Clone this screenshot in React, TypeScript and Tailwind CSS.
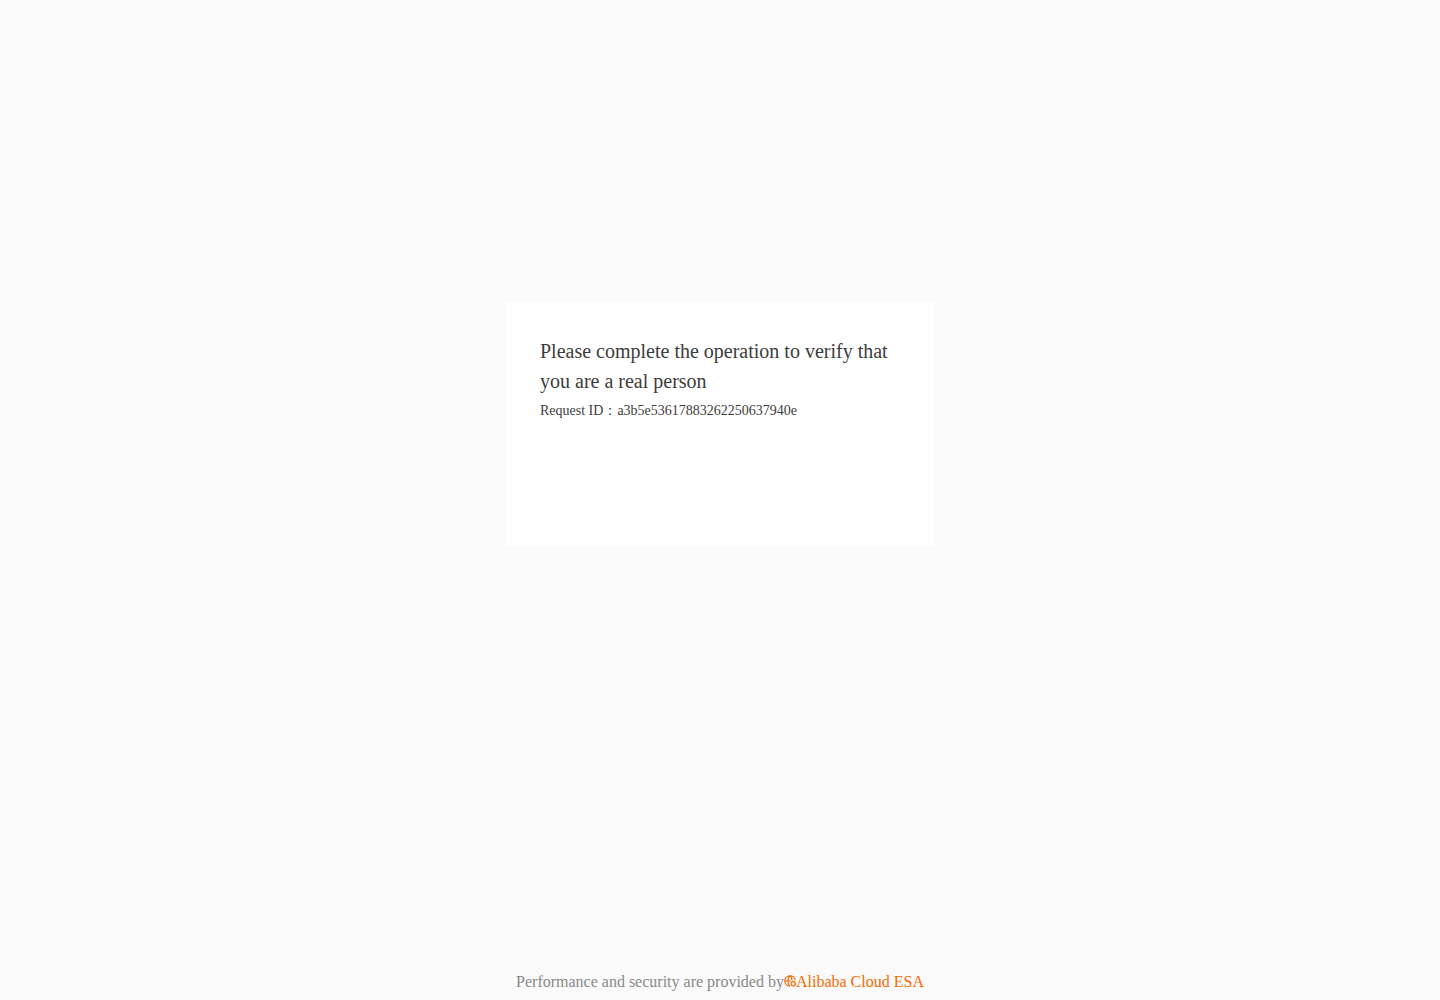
import React from 'react';

const REQUEST_ID = 'a3b5e53617883262250637940e';

const EsaIcon: React.FC = () => (
  <svg className="mb-0.5 h-3 w-3 shrink-0" viewBox="0 0 12 12" fill="none" stroke="currentColor" strokeWidth="1.2" aria-hidden="true">
    <path d="M5.6 11.2A5.2 5.2 0 1 1 11.2 5.4" />
    <path d="M5.6 .8C3.4 3.6 3.4 8.4 5.6 11.2M6.2 .8C7.6 2.2 8 3.6 8 5.4M.8 6h6" />
    <circle cx="9.2" cy="8.8" r="2.2" />
  </svg>
);

const App: React.FC = () => {
  return (
    <div className="flex min-h-screen flex-col bg-[#fafafa] font-['Liberation_Serif',serif]">
      <main className="flex flex-1 flex-col items-center px-4 pt-[302px]">
        <div className="min-h-[244px] w-full max-w-[428px] bg-white p-[34px] text-[#3c3c3c]">
          <h1 className="text-xl leading-[30px]">Please complete the operation to verify that you are a real person</h1>
          <p className="mt-1 text-sm leading-[22px]">Request ID：{REQUEST_ID}</p>
        </div>
      </main>

      <footer className="flex items-center justify-center pb-2 text-base leading-5 text-[#888888]">
        <span>Performance and security are provided by</span>
        <a href="#" className="flex items-center text-[#f56a00]">
          <EsaIcon />
          Alibaba Cloud ESA
        </a>
      </footer>
    </div>
  );
};

export default App;
